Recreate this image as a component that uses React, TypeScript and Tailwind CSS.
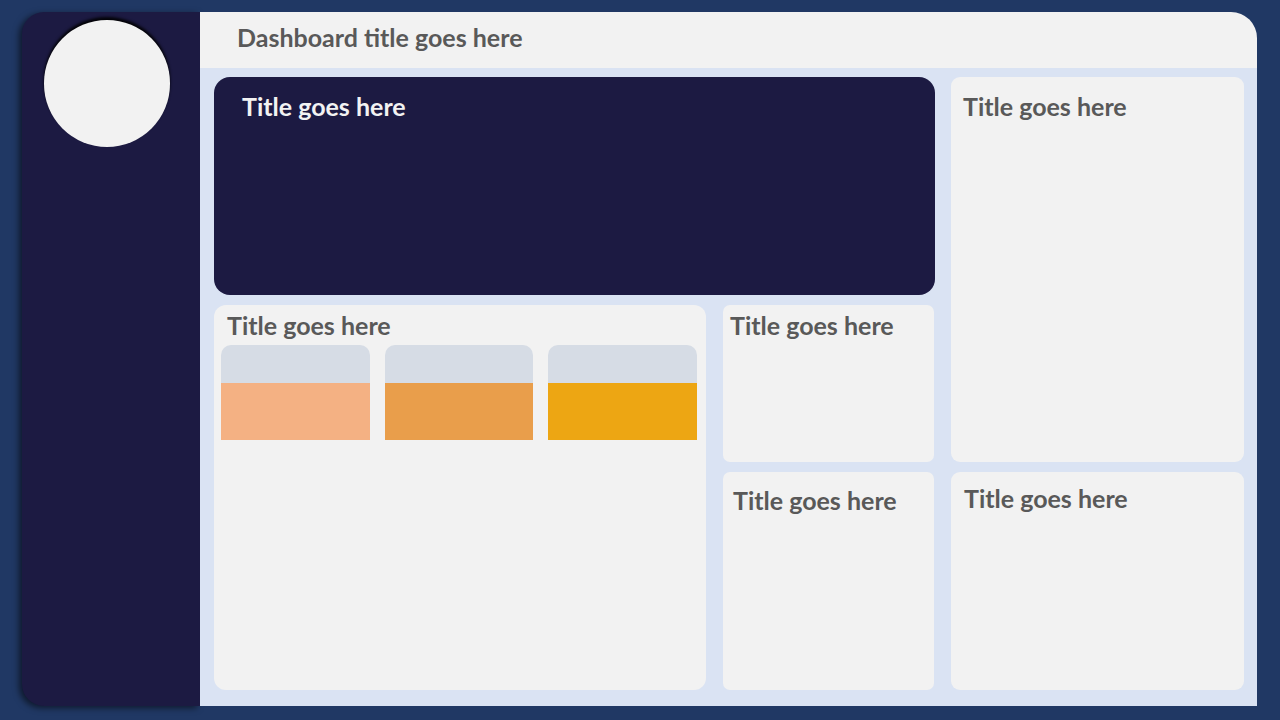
import React from 'react';

const font = { fontFamily: 'Lato, "Open Sans", Arial, sans-serif' };

function Panel({ className, title }: { className: string; title: string }) {
  return (
    <div className={`bg-[#f2f2f2] ${className}`}>
      <h3 className="text-[25px] font-bold leading-[28px] text-[#595959]">{title}</h3>
    </div>
  );
}

export default function App() {
  const cards = ['bg-[#f4b183]', 'bg-[#e99e4b]', 'bg-[#eda613]'];

  return (
    <div className="w-[1280px] h-[720px] bg-[#203864] pt-[12px] pl-[22px] overflow-hidden" style={font}>
      <div className="flex h-[694px] w-[1235px]">
        {/* Sidebar */}
        <div className="w-[178px] h-full bg-[#1c1a42] rounded-l-[22px] shadow-[-3px_2px_6px_rgba(0,0,0,0.55)] pt-[8px] pl-[22px]">
          <div className="w-[126px] h-[127px] rounded-full bg-[#f2f2f2] shadow-[0_-3px_3px_rgba(0,0,0,0.9)]" />
        </div>

        {/* Main */}
        <div className="w-[1057px] h-full flex flex-col">
          <div className="h-[56px] bg-[#f2f2f2] rounded-tr-[26px] pt-[11px] pl-[37px]">
            <h1 className="text-[25px] font-bold leading-[28px] text-[#595959]">Dashboard title goes here</h1>
          </div>

          <div className="flex-1 bg-[#dae3f3] pt-[9px] pl-[14px]">
            <div className="grid grid-cols-[492px_211px_293px] grid-rows-[218px_157px_218px] gap-x-[17px] gap-y-[10px]">
              <div className="col-span-2 bg-[#1c1a42] rounded-[16px] pt-[15px] pl-[28px] w-[721px]">
                <h2 className="text-[25px] font-bold leading-[28px] text-[#f2f2f2]">Title goes here</h2>
              </div>

              <Panel className="row-span-2 rounded-[9px] pt-[15px] pl-[12px]" title="Title goes here" />

              <div className="row-span-2 bg-[#f2f2f2] rounded-[12px] pt-[6px]">
                <h3 className="text-[25px] font-bold leading-[28px] text-[#595959] pl-[13px]">Title goes here</h3>
                <div className="grid grid-cols-3 gap-[15px] pl-[7px] pr-[9px] mt-[6px]">
                  {cards.map((c) => (
                    <div key={c} className="h-[95px] flex flex-col">
                      <div className="h-[38px] bg-[#d6dce5] rounded-t-[10px]" />
                      <div className={`flex-1 ${c}`} />
                    </div>
                  ))}
                </div>
              </div>

              <Panel className="rounded-[7px] pt-[6px] pl-[7px]" title="Title goes here" />
              <Panel className="rounded-[7px] pt-[14px] pl-[10px]" title="Title goes here" />
              <Panel className="rounded-[9px] pt-[12px] pl-[13px]" title="Title goes here" />
            </div>
          </div>
        </div>
      </div>
    </div>
  );
}
